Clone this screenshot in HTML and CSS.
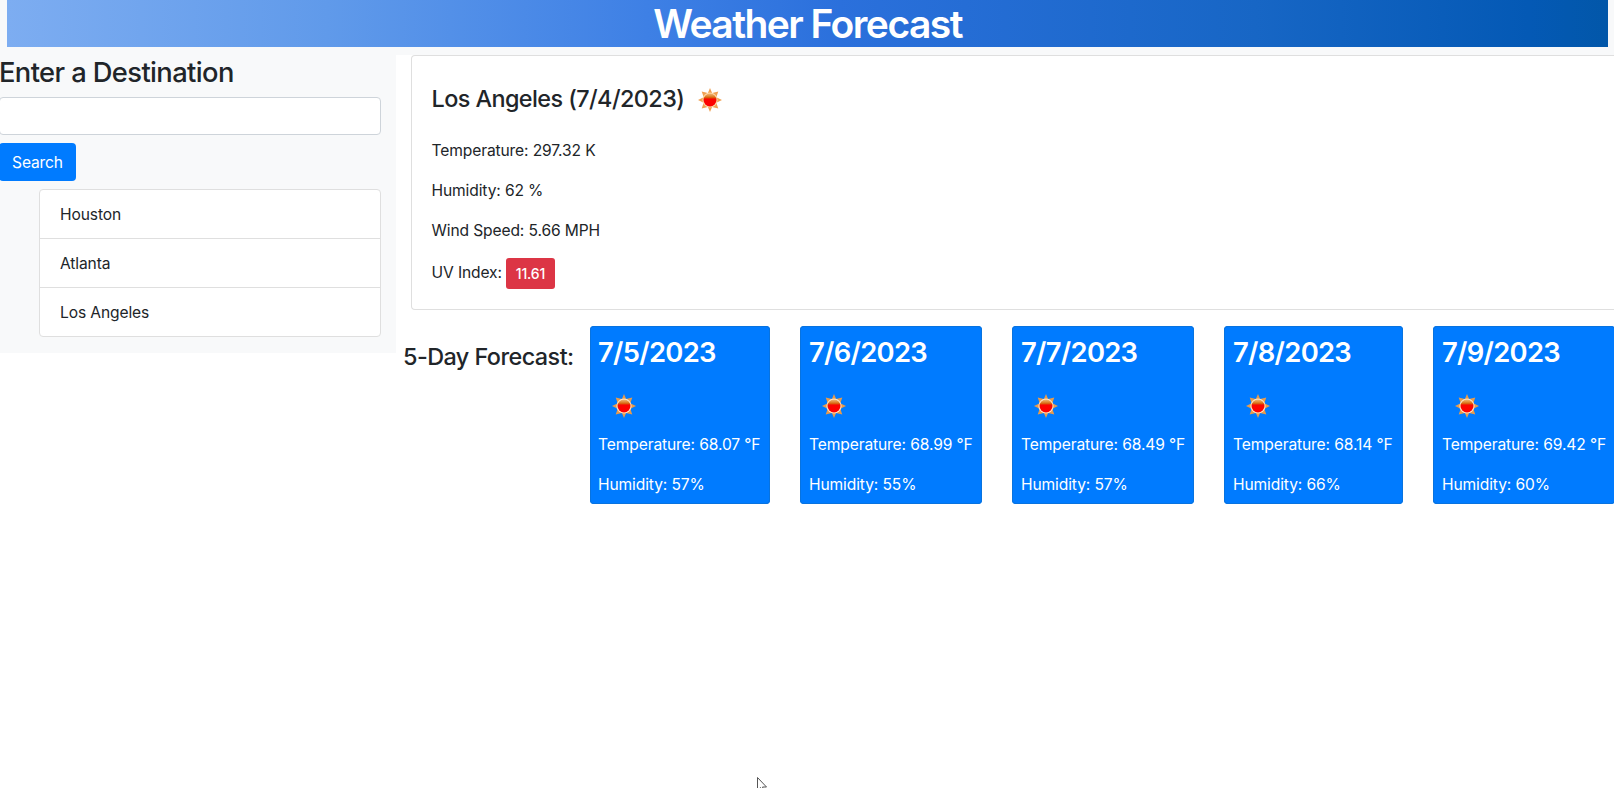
FILE: index.html
```html
<!DOCTYPE html>
<html lang="en">
<head>
<meta charset="utf-8">
<title>Weather Forecast</title>
<link rel="stylesheet" href="styles.css">
</head>
<body>
<svg class="defs" width="0" height="0" aria-hidden="true">
  <defs>
    <linearGradient id="core" x1="0" y1="0" x2="0" y2="1">
      <stop offset="0" stop-color="#f0b878"/><stop offset=".2" stop-color="#df8a35"/><stop offset=".33" stop-color="#d95a08"/><stop offset=".42" stop-color="#fa0500"/><stop offset="1" stop-color="#ff0000"/>
    </linearGradient>
    <symbol id="sun" viewBox="0 0 24 24">
      <path fill="#e79b4c" d="M12 0l2.1 5.1 6.2-1.5-2 5.7L24 12l-5.7 2.7 2 5.7-6.2-1.5L12 24l-2.1-5.1-6.2 1.5 2-5.7L0 12l5.7-2.7-2-5.7 6.2 1.5z"/>
      <circle cx="12" cy="12" r="7.6" fill="#ffe4c4"/>
      <circle cx="12" cy="12" r="6.5" fill="url(#core)"/>
    </symbol>
    <symbol id="sun-soft" viewBox="0 0 24 24">
      <path fill="#f0a052" d="M12 0l2.1 5.1 6.2-1.5-2 5.7L24 12l-5.7 2.7 2 5.7-6.2-1.5L12 24l-2.1-5.1-6.2 1.5 2-5.7L0 12l5.7-2.7-2-5.7 6.2 1.5z"/>
      <circle cx="12" cy="12" r="7.6" fill="#fcd9a8"/>
      <circle cx="12" cy="12" r="6.5" fill="url(#core)"/>
    </symbol>
  </defs>
</svg>
<header class="banner"><h1 class="title"><span>Weather Forecast</span></h1></header>
<div class="layout">
  <aside class="sidebar">
    <h3 class="prompt"><span>Enter a Destination</span></h3>
    <input class="field" type="text" aria-label="Destination">
    <button class="search">Search</button>
    <ul class="history"><li>Houston</li><li>Atlanta</li><li>Los Angeles</li></ul>
  </aside>
  <main class="content">
    <section class="current">
      <h4 class="city"><span>Los Angeles (7/4/2023)</span><svg class="sun"><use href="#sun-soft"/></svg></h4>
      <p>Temperature: 297.32 K</p>
      <p>Humidity: 62 %</p>
      <p>Wind Speed: 5.66 MPH</p>
      <p class="uv"><span>UV Index:</span><span class="badge">11.61</span></p>
    </section>
    <section class="forecast">
      <h4 class="label"><span>5-Day Forecast:</span></h4>
      <div class="days">
        <article class="day"><h3>7/5/2023</h3><svg class="sun"><use href="#sun"/></svg><p>Temperature: 68.07 °F</p><p>Humidity: 57%</p></article>
        <article class="day wide"><h3>7/6/2023</h3><svg class="sun"><use href="#sun"/></svg><p>Temperature: 68.99 °F</p><p>Humidity: 55%</p></article>
        <article class="day wide"><h3>7/7/2023</h3><svg class="sun"><use href="#sun"/></svg><p>Temperature: 68.49 °F</p><p>Humidity: 57%</p></article>
        <article class="day narrow"><h3>7/8/2023</h3><svg class="sun"><use href="#sun"/></svg><p>Temperature: 68.14 °F</p><p>Humidity: 66%</p></article>
        <article class="day wide"><h3>7/9/2023</h3><svg class="sun"><use href="#sun"/></svg><p>Temperature: 69.42 °F</p><p>Humidity: 60%</p></article>
      </div>
    </section>
  </main>
</div>
<svg class="pointer" viewBox="0 0 11 17"><path d="M.5.5v12.8l3-2.8 2 5 2-1-2-4.5h4z" fill="#fff" stroke="#555"/></svg>
</body>
</html>
```
FILE: styles.css
```css
* { box-sizing: border-box; }
body { margin: 0; height: 788px; overflow: hidden; position: relative; background: #fff; color: #212529; font: 400 15.6px/26px Inter, "Liberation Sans", sans-serif; letter-spacing: -.12px; }
h1, h3, h4, p, ul { margin: 0; padding: 0; font-weight: 500; }
p { height: 24px; font-weight: 400; }
.defs { position: absolute; }
.banner { height: 55px; padding: 0 6px 8px 7px; background: #f8f9fa; }
.title { height: 47px; background: linear-gradient(90deg, #7dadf1 0%, #609aea 20%, #3e80e5 40%, #2b70dc 52%, #1766c5 78%, #0459b5 95%, #0257a9 100%); color: #fff; font-size: 39px; font-weight: 600; line-height: 48px; letter-spacing: -1.55px; text-align: center; }
.layout { display: flex; align-items: flex-start; }
.sidebar { width: 396px; height: 298px; padding-right: 15px; background: #f8f9fa; flex: none; }
.prompt { height: 34px; font-size: 27.3px; line-height: 36px; margin: 0 0 8px -1px; letter-spacing: -.6px; }
.field { display: block; width: 382px; height: 38px; margin: 0 0 8px -1px; border: 1px solid #ced4da; border-radius: 4px; background: #fff; }
.search { display: block; width: 77px; height: 38px; margin: 0 0 8px -1px; padding: 1px 0 0; border: 0; border-radius: 4px; background: #007bff; color: #fff; font: inherit; letter-spacing: -.15px; }
.history { margin-left: 39px; border: 1px solid #dfdfdf; border-radius: 4px; background: #fff; list-style: none; font-weight: 400; }
.history li { height: 49px; padding: 12px 20px 10px; }
.history li + li { border-top: 1px solid #dfdfdf; }
.history li:first-child { height: 48px; }
.content { flex: none; width: 1218px; padding-left: 15px; }
.current { height: 255px; padding: 20px 20px 20px 19.5px; border: 1px solid #dfdfdf; border-right: 0; border-radius: 4px 0 0 4px; }
.city { display: flex; height: 50px; align-items: center; font-size: 23.4px; line-height: 29px; margin: -3px 0 15px; letter-spacing: -.57px; }
.city span { width: 252px; white-space: nowrap; }
.sun { display: block; width: 24px; height: 24px; }
.city .sun { margin: 3px 0 0 14px; }
.current p { margin-bottom: 16px; }
.current .uv { display: flex; align-items: flex-start; height: 31px; line-height: 29px; }
.uv > span:first-child { width: 74.5px; }
.badge { width: 49px; height: 31px; border-radius: 3px; background: #dc3545; color: #fff; font-size: 14px; font-weight: 500; line-height: 32px; text-align: center; }
.forecast { display: flex; padding-top: 16px; margin-left: -8px; }
.label { width: 187px; padding-top: 16px; font-size: 23.4px; line-height: 29px; white-space: nowrap; flex: none; letter-spacing: -.55px; }
.days { display: flex; gap: 30px; flex: none; }
.day { width: 180px; height: 178px; padding: 9px 8px; border: 0; border-radius: 4px; background: #007bff; color: #fff; white-space: nowrap; box-shadow: inset 0 0 0 1px #0873df; }
.wide { width: 182px; padding-left: 9px; }
.narrow { width: 179px; padding-left: 9px; }
.day h3 { height: 34px; font-size: 27.4px; font-weight: 600; line-height: 34px; letter-spacing: -.7px; }
.day .sun { margin: 25px 0 14px 14px; }
.wide .sun, .narrow .sun { margin-left: 13px; }
.day p + p { margin-top: 16px; }
.pointer { position: absolute; left: 757px; top: 777px; width: 11px; height: 17px; }
```
